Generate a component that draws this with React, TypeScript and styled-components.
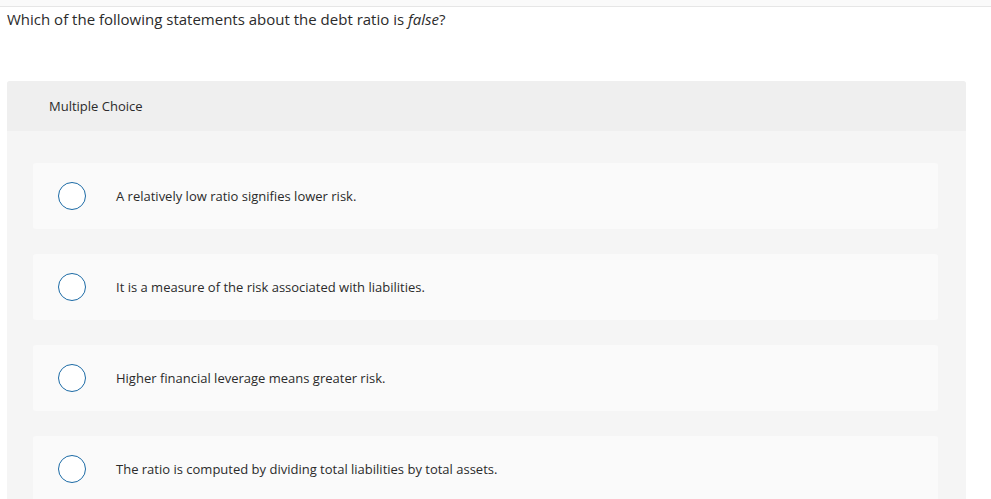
import * as React from 'react';
import styled, { createGlobalStyle } from 'styled-components';

const GlobalStyle = createGlobalStyle`
  html, body {
    margin: 0;
    padding: 0;
    background: #ffffff;
    font-family: 'Open Sans', 'Liberation Sans', Arial, sans-serif;
    color: #333333;
  }
`;

const options = [
  'A relatively low ratio signifies lower risk.',
  'It is a measure of the risk associated with liabilities.',
  'Higher financial leverage means greater risk.',
  'The ratio is computed by dividing total liabilities by total assets.',
];

const Page = styled.div`
  width: 991px;
  height: 499px;
  overflow: hidden;
  display: flex;
  flex-direction: column;
`;

const TopStrip = styled.div`
  height: 6px;
  background: #fafafa;
  border-bottom: 1px solid #e6e6e6;
  flex: 0 0 auto;
`;

const Prompt = styled.p`
  margin: 0;
  padding: 2px 0 0 7px;
  height: 74px;
  box-sizing: border-box;
  font-size: 15px;
  line-height: 20px;
  color: #2b2b2b;
  flex: 0 0 auto;

  em {
    font-style: italic;
  }
`;

const Panel = styled.section`
  margin: 0 25px 0 7px;
  background: #f5f5f5;
  border-radius: 3px 3px 0 0;
  flex: 1 0 auto;
  display: flex;
  flex-direction: column;
`;

const PanelHeader = styled.header`
  height: 50px;
  background: #efefef;
  border-radius: 3px 3px 0 0;
  display: flex;
  align-items: center;
  padding-left: 42px;
  font-size: 13px;
  color: #2b2b2b;
`;

const OptionList = styled.div`
  display: flex;
  flex-direction: column;
  gap: 25px;
  padding: 32px 28px 0 26px;
`;

const OptionCard = styled.label`
  height: 66px;
  background: #fafafa;
  border-radius: 3px;
  display: flex;
  align-items: center;
  padding-left: 25px;
  gap: 30px;
  font-size: 13px;
  color: #2b2b2b;
  cursor: pointer;
`;

const Radio = styled.span`
  width: 28px;
  height: 28px;
  box-sizing: border-box;
  border: 1.5px solid #1b6aa5;
  border-radius: 50%;
  background: #ffffff;
  flex: 0 0 auto;
`;

export default function App() {
  return (
    <Page>
      <GlobalStyle />
      <TopStrip />
      <Prompt>
        Which of the following statements about the debt ratio is <em>false</em>?
      </Prompt>
      <Panel>
        <PanelHeader>Multiple Choice</PanelHeader>
        <OptionList>
          {options.map((text) => (
            <OptionCard key={text}>
              <Radio />
              <span>{text}</span>
            </OptionCard>
          ))}
        </OptionList>
      </Panel>
    </Page>
  );
}
